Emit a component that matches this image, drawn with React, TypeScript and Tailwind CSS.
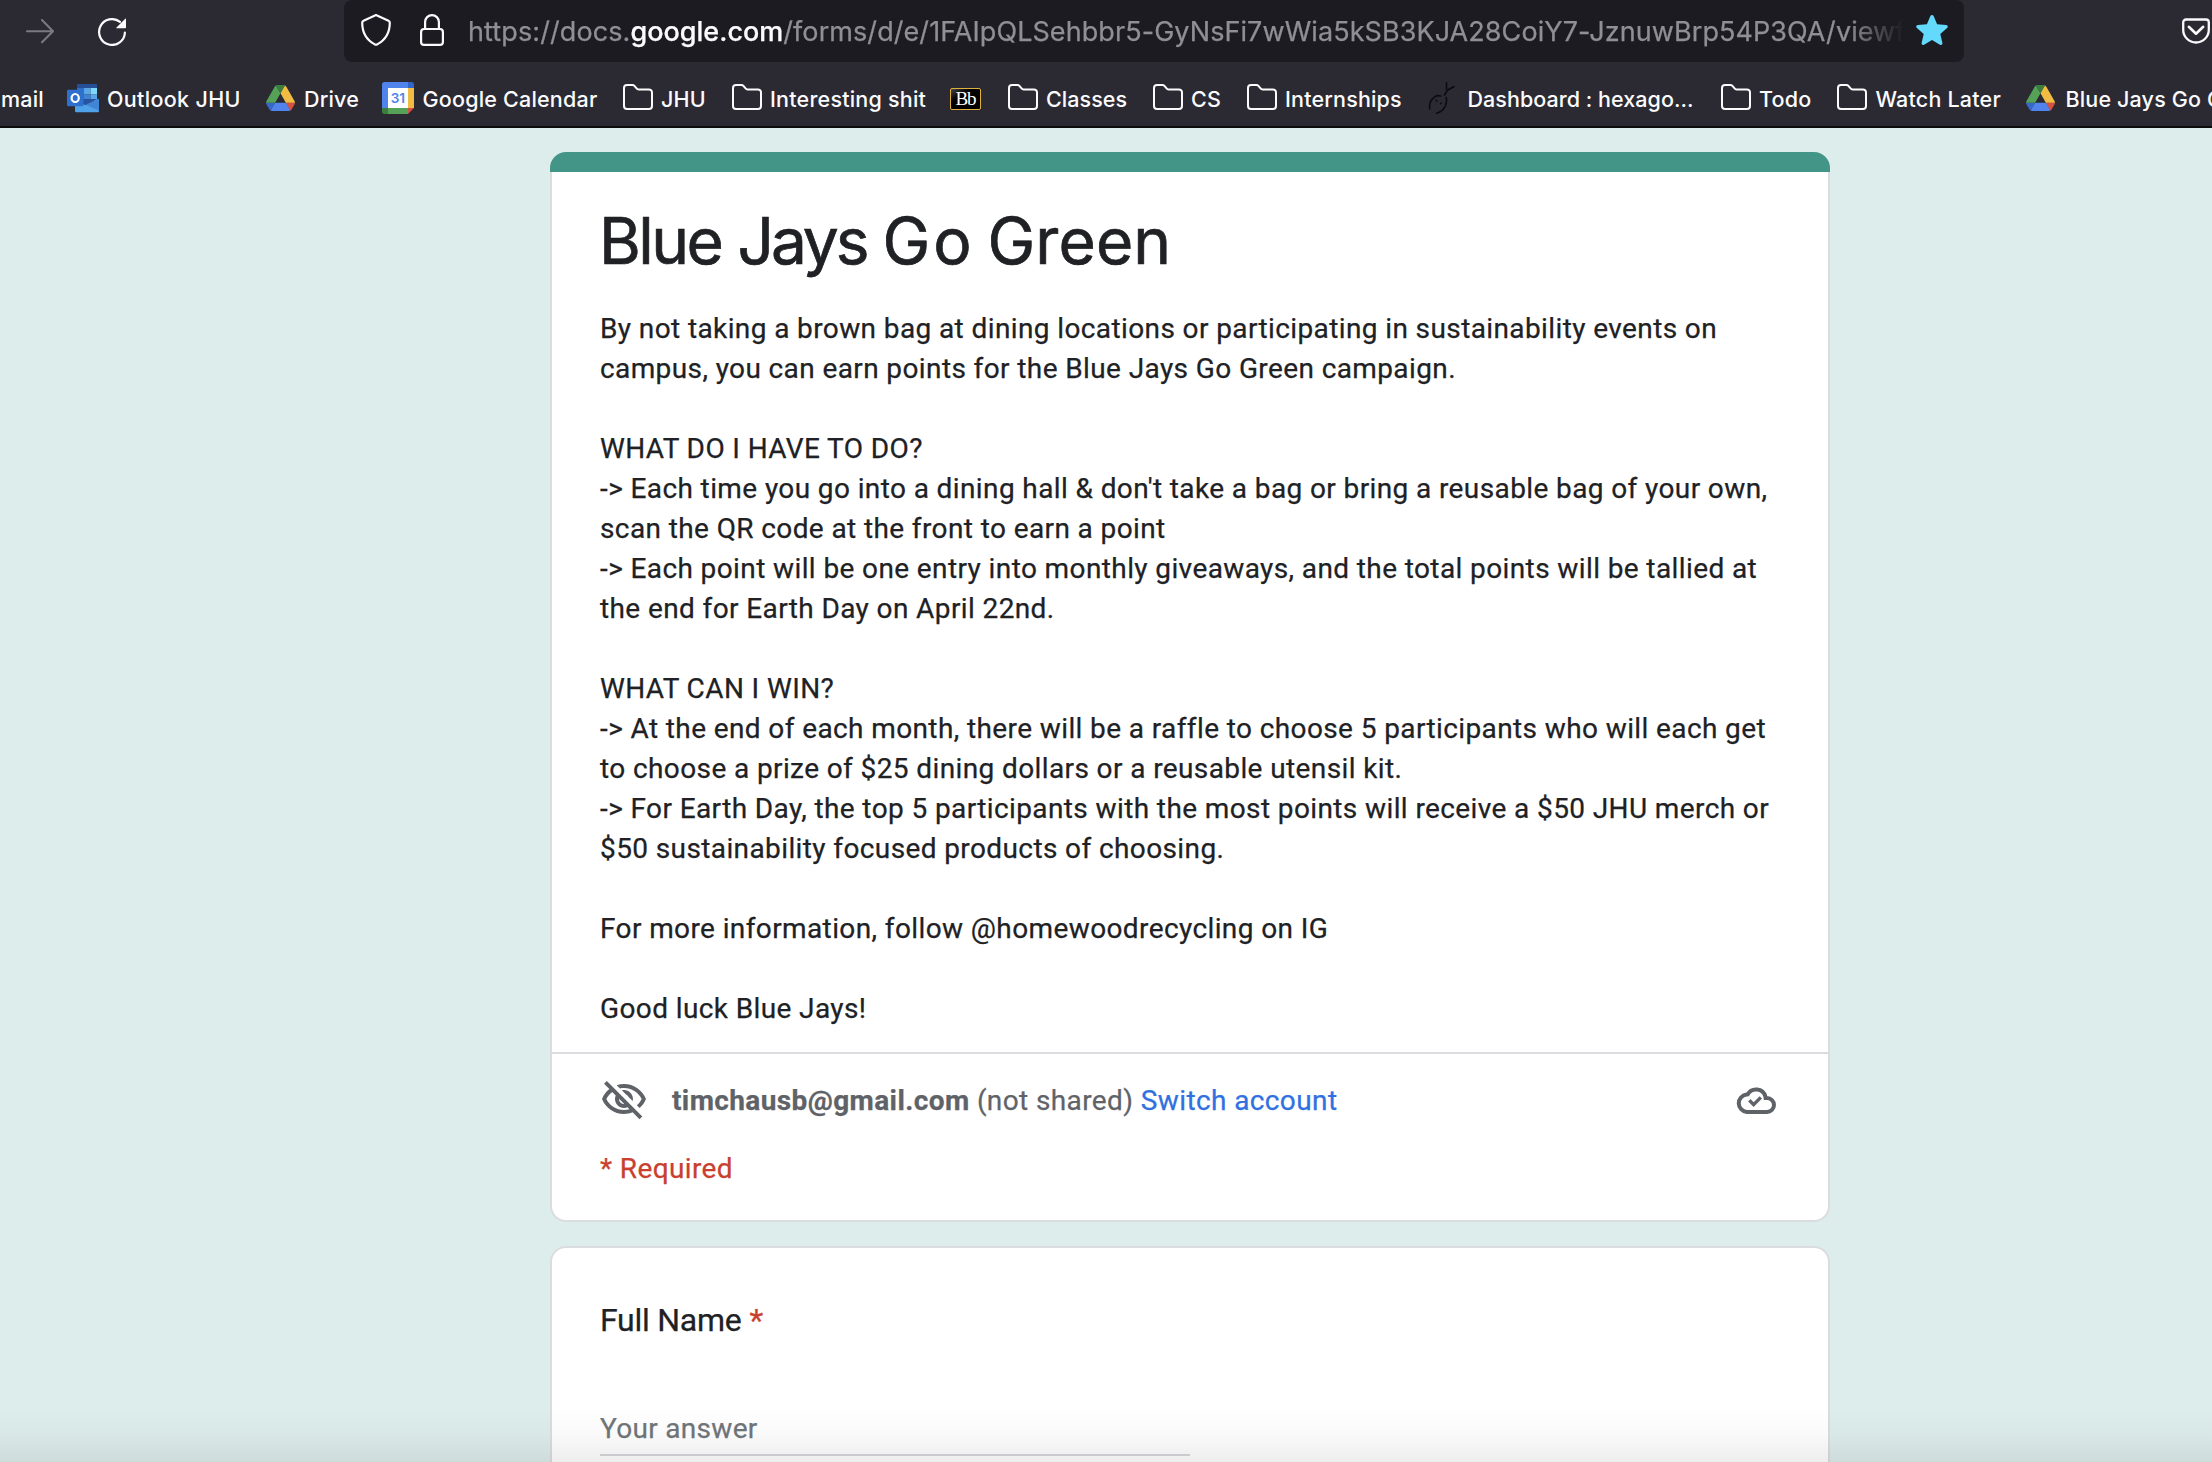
import React from "react";

function FolderIcon() {
  return (
    <svg viewBox="0 0 32 32" className="size-8" fill="none" stroke="#fbfbfe" strokeWidth="2">
      <path d="M6 3h5.4c.8 0 1.5.3 2 .9l2.4 2.8c.4.5 1 .7 1.7.7H28a3 3 0 0 1 3 3V24a3 3 0 0 1-3 3H6a3 3 0 0 1-3-3V6a3 3 0 0 1 3-3z" />
    </svg>
  );
}

function DriveIcon() {
  return (
    <svg viewBox="0 0 87.3 78" className="mx-[1.5px] h-[26px] w-[29px]">
      <path fill="#3668cc" d="m6.6 66.85 3.85 6.65c.8 1.4 1.95 2.5 3.3 3.3l13.75-23.8h-27.5c0 1.55.4 3.1 1.2 4.5z" />
      <path fill="#54a157" d="m43.65 25-13.75-23.8c-1.35.8-2.5 1.9-3.3 3.3l-25.4 44a9.06 9.06 0 0 0 -1.2 4.5h27.5z" />
      <path fill="#d85140" d="m73.55 76.8c1.35-.8 2.5-1.9 3.3-3.3l1.6-2.75 7.65-13.25c.8-1.4 1.2-2.95 1.2-4.5h-27.502l5.852 11.5z" />
      <path fill="#3c7d40" d="m43.65 25 13.75-23.8c-1.35-.8-2.9-1.2-4.5-1.2h-18.5c-1.6 0-3.15.45-4.5 1.2z" />
      <path fill="#5083ec" d="m59.8 53h-32.3l-13.75 23.8c1.35.8 2.9 1.2 4.5 1.2h50.8c1.6 0 3.15-.45 4.5-1.2z" />
      <path fill="#f2bc42" d="m73.4 26.5-12.7-22c-.8-1.4-1.95-2.5-3.3-3.3l-13.75 23.8 16.15 28h27.45c0-1.55-.4-3.1-1.2-4.5z" />
    </svg>
  );
}

function OutlookIcon() {
  return (
    <svg viewBox="0 0 32 32" className="size-8">
      <path fill="#254f96" d="M11 2h18a1 1 0 0 1 1 1v3H10V3a1 1 0 0 1 1-1z" />
      <path fill="#2f6fc9" d="M10 6h7v13h-7z" />
      <path fill="#58a8e9" d="M17 6h6.7v6.5H17z" />
      <path fill="#7ed8fb" d="M23.7 6H30v6.5h-6.3z" />
      <path fill="#3d84d6" d="M17 12.5h6.7v6.5H17z" />
      <path fill="#58a8e9" d="M23.7 12.5H30V19h-6.3z" />
      <path fill="#27549f" d="M10 17h20l-10 6-10-4z" />
      <path fill="#4186d6" d="M32 16.5V29L17 23.6z" />
      <path fill="#50a2e8" d="M8 18.5 32 28.6V29a1.2 1.2 0 0 1-1.2 1.2H9.2A1.2 1.2 0 0 1 8 29z" />
      <rect x="0" y="7.7" width="16.6" height="16.6" rx="1.4" fill="#2e70cd" />
      <ellipse cx="8.2" cy="16" rx="3.6" ry="4" fill="none" stroke="#fff" strokeWidth="2.2" />
    </svg>
  );
}

function CalendarIcon() {
  return (
    <svg viewBox="0 0 32 32" className="size-8">
      <path fill="#5083ec" d="M2.5 0H26v6H6v20H0V2.5A2.5 2.5 0 0 1 2.5 0z" />
      <path fill="#3265ca" d="M26 0h3.5A2.5 2.5 0 0 1 32 2.5V6h-6z" />
      <path fill="#f2bc42" d="M26 6h6v20h-6z" />
      <path fill="#fff" d="M6 6h20v20H6z" />
      <path fill="#3c7d40" d="M0 26h6v6H2.5A2.5 2.5 0 0 1 0 29.5z" />
      <path fill="#54a157" d="M6 26h20v6H6z" />
      <path fill="#d85140" d="M26 26h6l-6 6z" />
      <text x="15.8" y="21" textAnchor="middle" fontSize="13.5" fontWeight="600" fontFamily="Inter, sans-serif" fill="#5083ec">
        31
      </text>
    </svg>
  );
}

function BlackboardIcon() {
  return (
    <span className="mt-[2px] flex h-[22px] w-[31px] items-center justify-center rounded-[2px] border-[1.5px] border-[#dfb13c] bg-gradient-to-br from-[#4a4a4a] via-black via-45% to-black font-['Liberation_Serif',serif] text-[19px] leading-none tracking-[-1px] text-white">
      Bb
    </span>
  );
}

function HexagonIcon() {
  return (
    <svg viewBox="0 0 32 32" className="size-8" fill="none" stroke="#0b0b0e" strokeWidth="1.6" strokeLinecap="round">
      <path d="M19.5.8V7M27 4.5 20.5 8.2 17.5 13" />
      <path d="M2.8 27c-.8-5 .8-9.5 5-12.2 1.8-1.1 4-1.5 6-.8M19.2 15.5c1.2 6-1.5 13.5-9.7 15.7" />
      <circle cx="9.5" cy="18.7" r="1" fill="#0b0b0e" stroke="none" />
      <circle cx="13.8" cy="21.5" r="1" fill="#0b0b0e" stroke="none" />
    </svg>
  );
}

type Bookmark = { label?: string; icon?: React.ReactNode; size: string; text?: string };

const bookmarks: Bookmark[] = [
  { label: "mail", size: "w-[67px] pl-px" },
  { label: "Outlook JHU", icon: <OutlookIcon />, size: "w-[197px]", text: "tracking-[0.32px]" },
  { label: "Drive", icon: <DriveIcon />, size: "w-[118px]" },
  { label: "Google Calendar", icon: <CalendarIcon />, size: "w-[239px]", text: "ml-[0.5px] tracking-[0.2px]" },
  { label: "JHU", icon: <FolderIcon />, size: "w-[109px]" },
  { label: "Interesting shit", icon: <FolderIcon />, size: "w-[220px]", text: "tracking-[0.22px]" },
  { icon: <BlackboardIcon />, size: "w-[56px]" },
  { label: "Classes", icon: <FolderIcon />, size: "w-[145px]", text: "tracking-[0.05px]" },
  { label: "CS", icon: <FolderIcon />, size: "w-[94px]" },
  { label: "Internships", icon: <FolderIcon />, size: "w-[182px]" },
  { label: "Dashboard : hexago...", icon: <HexagonIcon />, size: "w-[292px]", text: "ml-[0.5px] tracking-[0.04px]" },
  { label: "Todo", icon: <FolderIcon />, size: "w-[116px]" },
  { label: "Watch Later", icon: <FolderIcon />, size: "w-[189.5px]", text: "ml-[0.5px] tracking-[0.2px]" },
  { label: "Blue Jays Go Green", icon: <DriveIcon />, size: "w-[240px]", text: "ml-px tracking-[0.15px]" },
];

function BrowserBar() {
  return (
    <header className="h-32 overflow-hidden border-b-2 border-[#0c0c0d] bg-[#2b2a33] font-['Inter',sans-serif] text-[#fbfbfe]">
      <div className="flex h-[62px] items-start pr-[2px] pl-[26px]">
        <svg viewBox="0 0 28 28" className="mt-[17px] size-7" fill="none" stroke="#7b7a80" strokeWidth="2" strokeLinecap="round" strokeLinejoin="round">
          <path d="M1 14.3h26M16 3l11 11.3L16 25.3" />
        </svg>
        <svg viewBox="0 0 28 28" className="mt-[18px] ml-11 size-7" fill="none">
          <path d="M26.9 14.5A12.9 12.9 0 1 1 22 3.9" stroke="#fbfbfe" strokeWidth="2.2" strokeLinecap="round" />
          <path d="M27.5.5c.3-.2.5 0 .5.3V9.5a.8.8 0 0 1-.8.8h-8.3c-.6 0-.8-.5-.4-.9z" fill="#fbfbfe" />
        </svg>
        <div className="ml-[218px] flex h-[62px] w-[1620px] items-start rounded-lg bg-[#1c1b22] pl-[17px]">
          <svg viewBox="0 0 30 32" className="mt-[14px] h-8 w-[30px]" fill="none" stroke="#fbfbfe" strokeWidth="2.2" strokeLinejoin="round">
            <path d="M14 1.4c.6-.4 1.4-.4 2 0l11.5 5.3c.8.4 1.3 1.1 1.3 2 0 9.5-3.6 16.8-12.6 21.7-.8.4-1.6.4-2.4 0C4.8 25.5 1.2 18.2 1.2 8.7c0-.9.5-1.6 1.3-2z" />
          </svg>
          <svg viewBox="0 0 24 32" className="mt-[14px] ml-[29px] h-8 w-6" fill="none" stroke="#fbfbfe" strokeWidth="2.2">
            <rect x="1.1" y="15" width="21.8" height="15.9" rx="3" />
            <path d="M5.1 15V8a6.9 6.9 0 0 1 13.8 0v7" />
          </svg>
          <div className="mt-[12px] ml-[24px] w-[1436px] overflow-hidden text-[27px] leading-10 whitespace-nowrap text-[#8f8f95] [-webkit-text-stroke:0.25px_currentColor] [mask-image:linear-gradient(to_right,black_calc(100%-56px),transparent)]">
            <span className="tracking-[0.1px]">https://docs.</span>
            <span className="font-medium text-[#fbfbfe]">google.com</span>
            <span className="tracking-[0.073px]">/forms/d/e/1FAIpQLSehbbr5-GyNsFi7wWia5kSB3KJA28CoiY7-JznuwBrp54P3QA/viewf</span>
          </div>
          <svg viewBox="0 0 32 32" className="mt-[14px] ml-[11.5px] size-8" fill="#63d9fb">
            <path d="M14.4 1.9c.6-1.3 2.6-1.3 3.2 0l3.5 8.4 9 .8c1.7.2 2.2 1.8 1 2.9l-6.8 6 2.1 8.9c.3 1.6-1.1 2.6-2.5 1.8L16 26l-7.9 4.7c-1.4.8-2.8-.2-2.5-1.8l2.1-8.9-6.8-6c-1.2-1.1-.7-2.7 1-2.9l9-.8z" />
          </svg>
        </div>
        <svg viewBox="0 0 28 26" className="mt-[17.5px] ml-auto h-[26px] w-7" fill="none" stroke="#fbfbfe" strokeWidth="2.3" strokeLinecap="round" strokeLinejoin="round">
          <path d="M4 1.5h20a2.8 2.8 0 0 1 2.8 2.8v7.4a12.8 12.8 0 0 1-25.6 0V4.3A2.8 2.8 0 0 1 4 1.5z" />
          <path d="m6.8 8.8 7.2 6.9 7.2-6.9" strokeWidth="2.6" />
        </svg>
      </div>
      <nav className="flex h-16 w-[2400px] items-center pt-[10px] text-[21.5px] leading-6 font-medium whitespace-nowrap">
        {bookmarks.map((b, i) => (
          <a key={i} className={"flex h-8 shrink-0 items-center gap-2 " + b.size}>
            {b.icon && <span className="-mt-[3px] flex shrink-0">{b.icon}</span>}
            {b.label && <span className={b.text ?? "tracking-[0.18px]"}>{b.label}</span>}
          </a>
        ))}
      </nav>
    </header>
  );
}

const description = `By not taking a brown bag at dining locations or participating in sustainability events on
campus, you can earn points for the Blue Jays Go Green campaign.

WHAT DO I HAVE TO DO?
-> Each time you go into a dining hall & don't take a bag or bring a reusable bag of your own,
scan the QR code at the front to earn a point
-> Each point will be one entry into monthly giveaways, and the total points will be tallied at
the end for Earth Day on April 22nd.

WHAT CAN I WIN?
-> At the end of each month, there will be a raffle to choose 5 participants who will each get
to choose a prize of $25 dining dollars or a reusable utensil kit.
-> For Earth Day, the top 5 participants with the most points will receive a $50 JHU merch or
$50 sustainability focused products of choosing.

For more information, follow @homewoodrecycling on IG

Good luck Blue Jays!`;

function HeaderCard() {
  return (
    <section className="h-[1070px] rounded-2xl bg-[linear-gradient(#439587_40px,transparent_40px)] pt-5">
      <div className="h-[1050px] rounded-b-2xl border-2 border-t-0 border-[#dadce0] bg-white">
        <div className="h-[880px] px-12 pt-[29px]">
          <h1 className="-ml-px flex h-20 font-['Inter',sans-serif] text-[64px] leading-[80px] whitespace-nowrap [-webkit-text-stroke:0.7px_#202124]">
            <span className="w-[138.5px] tracking-[-2.6px]">Blue </span>
            <span className="w-[145px] tracking-[-3.1px]">Jays </span>
            <span className="w-[105px] tracking-[3px]">Go </span>
            <span className="tracking-[0.1px]">Green</span>
          </h1>
          <p className="mt-7 whitespace-pre">{description}</p>
        </div>
        <div className="border-t-2 border-[#dadce0] px-12 pt-[22px]">
          <div className="flex h-12 items-center text-[#5f6368]">
            <svg viewBox="0 0 24 24" className="size-12" fill="currentColor">
              <path d="M12 6c3.79 0 7.17 2.13 8.82 5.5-.59 1.22-1.42 2.27-2.41 3.12l1.41 1.41c1.39-1.23 2.49-2.77 3.18-4.53C21.27 7.11 17 4 12 4c-1.27 0-2.49.2-3.64.57l1.65 1.65C10.66 6.09 11.32 6 12 6zm-1.07 1.14L13 9.21c.57.25 1.03.71 1.28 1.28l2.07 2.07c.08-.34.14-.7.14-1.07C16.5 9.01 14.48 7 12 7c-.37 0-.72.05-1.07.14zM2.01 3.87l2.68 2.68C3.06 7.83 1.77 9.53 1 11.5 2.73 15.89 7 19 12 19c1.52 0 2.98-.29 4.32-.82l3.42 3.42 1.41-1.41L3.42 2.45 2.01 3.87zm7.5 7.5l2.61 2.61c-.04.01-.08.02-.12.02-1.38 0-2.5-1.12-2.5-2.5 0-.05.01-.08.01-.13zm-3.4-3.4l1.75 1.75c-.23.55-.36 1.15-.36 1.78 0 2.48 2.02 4.5 4.5 4.5.63 0 1.23-.13 1.77-.36l.98.98c-.88.24-1.8.38-2.75.38-3.79 0-7.17-2.13-8.82-5.5.7-1.43 1.72-2.61 2.93-3.53z" />
            </svg>
            <p className="ml-6 pt-px">
              <b className="font-bold">timchausb@gmail.com</b> (not shared) <a className="text-[#3070e0]">Switch account</a>
            </p>
            <svg viewBox="0 0 40 28" className="mr-1 ml-auto h-7 w-10" fill="none" stroke="currentColor" strokeWidth="4">
              <path d="M10.8 26a8.8 8.8 0 0 1-.3-17.5l1.1-.1A9.7 9.7 0 0 1 29.4 10.5L29.6 12H31a7 7 0 0 1 0 14z" />
              <path d="m13.3 14.3 4.3 4.3 7.2-7.2" strokeWidth="3.4" />
            </svg>
          </div>
          <p className="mt-[25px] text-[#c9402f]">* Required</p>
        </div>
      </div>
    </section>
  );
}

function QuestionCard() {
  return (
    <section className="mt-6 h-[400px] rounded-2xl border-2 border-[#dadce0] bg-white px-12 pt-12">
      <h2 className="flex gap-2 text-[32px] leading-[48px] tracking-[-0.25px]">
        Full Name <span className="text-[#c9402f]">*</span>
      </h2>
      <div className="mt-16 h-12 w-[590px] border-b-2 border-[#d6d7da] pt-px tracking-[0.3px] text-[#70757a]">Your answer</div>
    </section>
  );
}

export default function App() {
  return (
    <div className="relative h-[1462px] w-[2212px] overflow-hidden bg-[#ddedeb]">
      <BrowserBar />
      <main className="ml-[550px] w-[1280px] pt-6 font-['Roboto',sans-serif] text-[28px] leading-10 tracking-[0.39px] text-[#202124] [-webkit-text-stroke:0.25px_currentColor]">
        <HeaderCard />
        <QuestionCard />
      </main>
      <div className="absolute inset-x-0 bottom-0 h-14 bg-gradient-to-b from-black/0 via-black/[0.02] to-black/[0.07]" />
    </div>
  );
}
